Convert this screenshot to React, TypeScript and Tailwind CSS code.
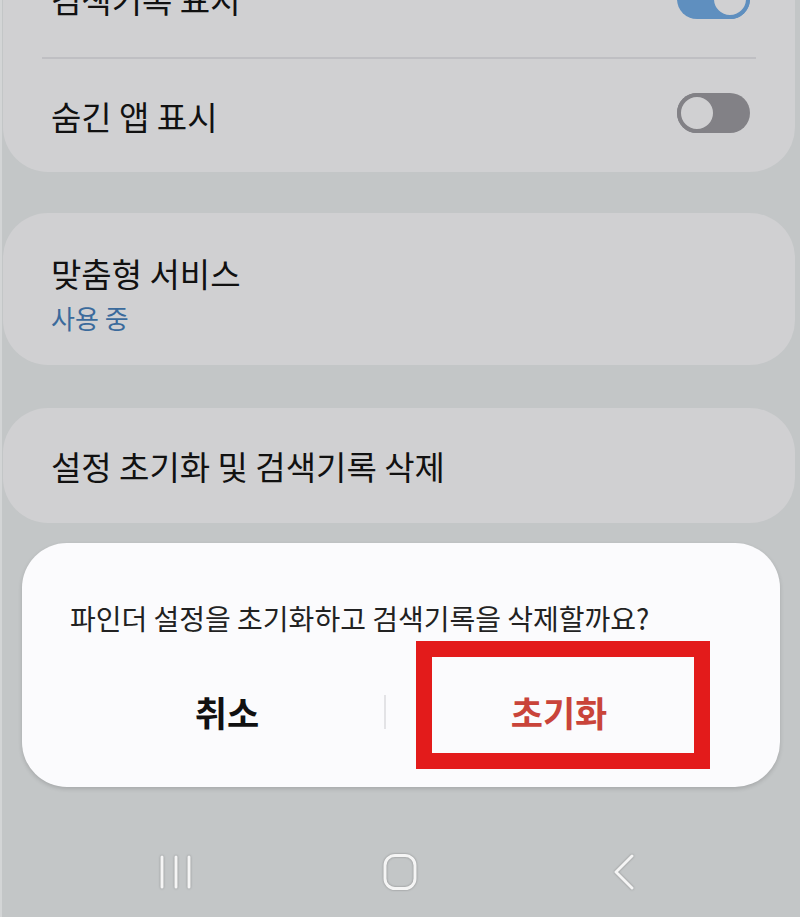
import React from "react";

const font = { fontFamily: '"Noto Sans CJK KR", "Noto Sans", sans-serif' };

function Toggle({ on }: { on: boolean }) {
  return (
    <div
      className={
        "relative w-[73px] h-[40px] rounded-full " +
        (on ? "bg-[#5f8fbf]" : "bg-[#828186] -mt-[6px]")
      }
    >
      <div
        className={
          "absolute top-0 w-[40px] h-[40px] rounded-full border-[4px] bg-[#d0d0d2] " +
          (on ? "right-0 border-[#5f8fbf]" : "left-0 border-[#828186]")
        }
      />
    </div>
  );
}

export default function App() {
  return (
    <div
      className="w-[800px] h-[917px] bg-[#c3c6c7] overflow-hidden flex flex-col border-l-[2px] border-[#d3d5d6]"
      style={font}
    >
      {/* Card 1 */}
      <div className="ml-[1px] w-[792px] -mt-[59px] bg-[#d0d0d2] rounded-[45px] flex flex-col shrink-0">
        <div className="h-[116px] flex items-center justify-between pl-[48px] pr-[45px]">
          <span className="text-[33px] leading-[40px] text-[#111]">검색기록 표시</span>
          <Toggle on={true} />
        </div>
        <div className="mx-[39px] h-[2px] bg-[#bfbfc3]" />
        <div className="h-[113px] flex items-center justify-between pl-[48px] pr-[45px]">
          <span className="text-[33px] leading-[40px] text-[#111]">숨긴 앱 표시</span>
          <Toggle on={false} />
        </div>
      </div>

      {/* Card 2 */}
      <div className="ml-[1px] w-[792px] mt-[41px] h-[152px] bg-[#d0d0d2] rounded-[45px] flex flex-col pt-[40px] pl-[48px] shrink-0">
        <span className="text-[33px] leading-[40px] text-[#111]">맞춤형 서비스</span>
        <span className="text-[26px] leading-[34px] mt-[8px] text-[#3a6a9c]">사용 중</span>
      </div>

      {/* Card 3 */}
      <div className="ml-[1px] w-[792px] mt-[43px] h-[115px] bg-[#d0d0d2] rounded-[45px] flex items-center pl-[48px] shrink-0">
        <span className="text-[33px] leading-[40px] text-[#111]">설정 초기화 및 검색기록 삭제</span>
      </div>

      {/* Dialog */}
      <div className="relative ml-[20px] w-[758px] mt-[20px] h-[244px] bg-[#fbfbfd] rounded-[45px] shadow-[0_2px_4px_rgba(0,0,0,0.15)] flex flex-col shrink-0">
        <div className="pt-[55px] pl-[48px] text-[28px] leading-[40px] text-[#222]">
          파인더 설정을 초기화하고 검색기록을 삭제할까요?
        </div>
        <div className="flex items-center mt-[52px] h-[44px] px-[48px]">
          <div className="w-[314px] flex justify-center">
            <span className="text-[35px] leading-[44px] font-bold text-[#111]">취소</span>
          </div>
          <div className="w-[2px] h-[34px] bg-[#e3e3e6]" />
          <div className="flex-1 flex justify-center">
            <span className="text-[35px] leading-[44px] font-bold text-[#c9443a]">초기화</span>
          </div>
        </div>
        <div className="absolute left-[394px] top-[98px] w-[294px] h-[128px] border-[16px] border-[#e31b1b]" />
      </div>

      {/* Nav bar */}
      <div className="flex-1 flex items-start pt-[67px]">
        <svg width="36" height="36" viewBox="0 0 36 36" className="ml-[156px] drop-shadow-[0_0_1px_rgba(0,0,0,0.3)]">
          <g stroke="#f5f5f5" strokeWidth="3" strokeLinecap="round">
            <line x1="4" y1="3" x2="4" y2="33" />
            <line x1="18" y1="3" x2="18" y2="33" />
            <line x1="31" y1="3" x2="31" y2="33" />
          </g>
        </svg>
        <svg width="36" height="38" viewBox="0 0 36 38" className="ml-[188px] -mt-[1px] drop-shadow-[0_0_1px_rgba(0,0,0,0.3)]">
          <rect x="3" y="2.5" width="30" height="33" rx="10" fill="none" stroke="#f5f5f5" strokeWidth="3" />
        </svg>
        <svg width="28" height="38" viewBox="0 0 28 38" className="ml-[192px] -mt-[1px] drop-shadow-[0_0_1px_rgba(0,0,0,0.3)]">
          <polyline points="22,3 6,19 22,35" fill="none" stroke="#f5f5f5" strokeWidth="3" strokeLinecap="round" strokeLinejoin="round" />
        </svg>
      </div>
    </div>
  );
}
